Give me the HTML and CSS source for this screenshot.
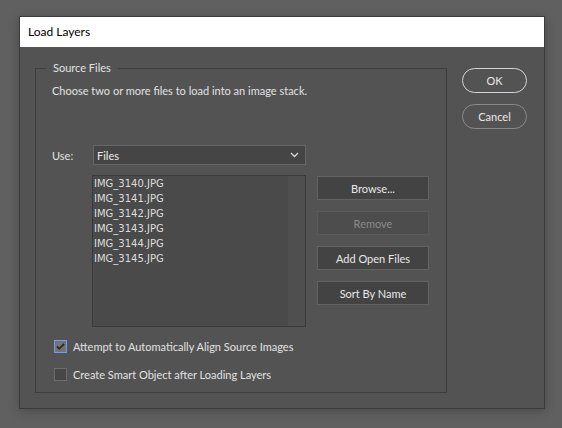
FILE: index.html
```html
<!DOCTYPE html>
<html lang="en">
<head>
    <meta charset="UTF-8">
    <title>Load Layers</title>
    <link rel="stylesheet" href="styles.css">
</head>
<body>

<div class="dialog">
    <div class="titlebar">Load Layers</div>
    <div class="dialog-body">
        <div class="group">
            <span class="group-title">Source Files</span>
            <p class="hint">Choose two or more files to load into an image stack.</p>

            <div class="use-row">
                <label class="use-label">Use:</label>
                <div class="select">
                    <span>Files</span>
                    <svg width="9" height="6" viewBox="0 0 9 6"><path d="M1 1 L4.5 4.5 L8 1" fill="none" stroke="#d8d8d8" stroke-width="1.3"/></svg>
                </div>
            </div>

            <div class="files-row">
                <div class="file-list">
                    <ul>
                        <li>IMG_3140.JPG</li>
                        <li>IMG_3141.JPG</li>
                        <li>IMG_3142.JPG</li>
                        <li>IMG_3143.JPG</li>
                        <li>IMG_3144.JPG</li>
                        <li>IMG_3145.JPG</li>
                    </ul>
                    <div class="scroll-track"></div>
                </div>
                <div class="list-buttons">
                    <button class="btn">Browse...</button>
                    <button class="btn" disabled>Remove</button>
                    <button class="btn">Add Open Files</button>
                    <button class="btn">Sort By Name</button>
                </div>
            </div>

            <div class="check-row">
                <span class="checkbox checked">
                    <svg width="11" height="11" viewBox="0 0 11 11"><path d="M2 5.5 L4.3 7.8 L9 3" fill="none" stroke="#2b2b2b" stroke-width="1.8"/></svg>
                </span>
                <span>Attempt to Automatically Align Source Images</span>
            </div>
            <div class="check-row">
                <span class="checkbox"></span>
                <span>Create Smart Object after Loading Layers</span>
            </div>
        </div>

        <div class="side-buttons">
            <button class="pill primary">OK</button>
            <button class="pill">Cancel</button>
        </div>
    </div>
</div>

</body>
</html>
```

FILE: styles.css
```css
body {
    margin: 0;
    width: 562px;
    height: 428px;
    background-color: #606060;
    font-family: Lato, "Noto Sans", sans-serif;
    font-size: 11px;
    color: #e2e2e2;
    padding: 16px 0 0 19px;
    box-sizing: border-box;
    overflow: hidden;
}
.dialog {
    width: 526px;
    height: 393px;
    box-sizing: border-box;
    border: 1px solid #3a3a3a;
    background-color: #535353;
    box-shadow: 0 2px 10px rgba(0, 0, 0, 0.25);
}
.titlebar {
    height: 30px;
    line-height: 30px;
    background-color: #fff;
    color: #000;
    padding-left: 8px;
    font-size: 12px;
}
.dialog-body {
    display: flex;
    padding: 21px 0 0 15px;
}
.group {
    position: relative;
    width: 412px;
    height: 325px;
    box-sizing: border-box;
    border: 1px solid #3d3d3d;
    padding: 14px 0 0 16px;
}
.group-title {
    position: absolute;
    top: -9px;
    left: 10px;
    padding: 0 7px;
    line-height: 16px;
    background-color: #535353;
}
.hint {
    margin: 0;
    line-height: 16px;
}
.use-row {
    display: flex;
    align-items: center;
    margin-top: 46px;
}
.use-label {
    width: 41px;
}
.select {
    width: 213px;
    height: 20px;
    box-sizing: border-box;
    border: 1px solid #666;
    background-color: #454545;
    display: flex;
    align-items: center;
    justify-content: space-between;
    padding: 0 6px 0 3px;
    color: #ececec;
}
.files-row {
    display: flex;
    margin-top: 10px;
}
.file-list {
    width: 214px;
    height: 152px;
    box-sizing: border-box;
    border: 1px solid #3a3a3a;
    background-color: #4a4a4a;
    display: flex;
    margin-left: 40px;
}
.file-list ul {
    list-style: none;
    margin: 0;
    padding: 0 0 0 1px;
    flex: 1;
}
.file-list li {
    height: 15px;
    line-height: 15px;
    font-family: "DejaVu Sans", sans-serif;
    font-size: 10px;
    color: #dedede;
}
.scroll-track {
    width: 17px;
    background-color: #4f4f4f;
}
.list-buttons {
    display: flex;
    flex-direction: column;
    gap: 11px;
    margin-left: 11px;
    padding-top: 1px;
}
.btn {
    width: 112px;
    height: 24px;
    font-family: inherit;
    font-size: 11px;
    color: #e8e8e8;
    background-color: #434343;
    border: 1px solid #626262;
    padding: 0;
}
.btn:disabled {
    background-color: #4d4d4d;
    border-color: #5a5a5a;
    color: #8a8a8a;
}
.check-row {
    display: flex;
    align-items: center;
    gap: 6px;
    height: 14px;
    margin-left: 2px;
}
.files-row + .check-row {
    margin-top: 12px;
}
.check-row + .check-row {
    margin-top: 14px;
}
.checkbox {
    width: 13px;
    height: 13px;
    box-sizing: border-box;
    border: 1px solid #6c6c6c;
    background-color: #474747;
    display: flex;
    align-items: center;
    justify-content: center;
}
.checkbox.checked {
    border-color: #6d9ff0;
    background-color: #737373;
}
.side-buttons {
    display: flex;
    flex-direction: column;
    gap: 11px;
    margin-left: 15px;
}
.pill {
    width: 65px;
    height: 25px;
    border-radius: 13px;
    border: 1px solid #8a8a8a;
    background: transparent;
    color: #e8e8e8;
    font-family: inherit;
    font-size: 11px;
    padding: 0;
}
.pill.primary {
    border-color: #d4d4d4;
}
```
